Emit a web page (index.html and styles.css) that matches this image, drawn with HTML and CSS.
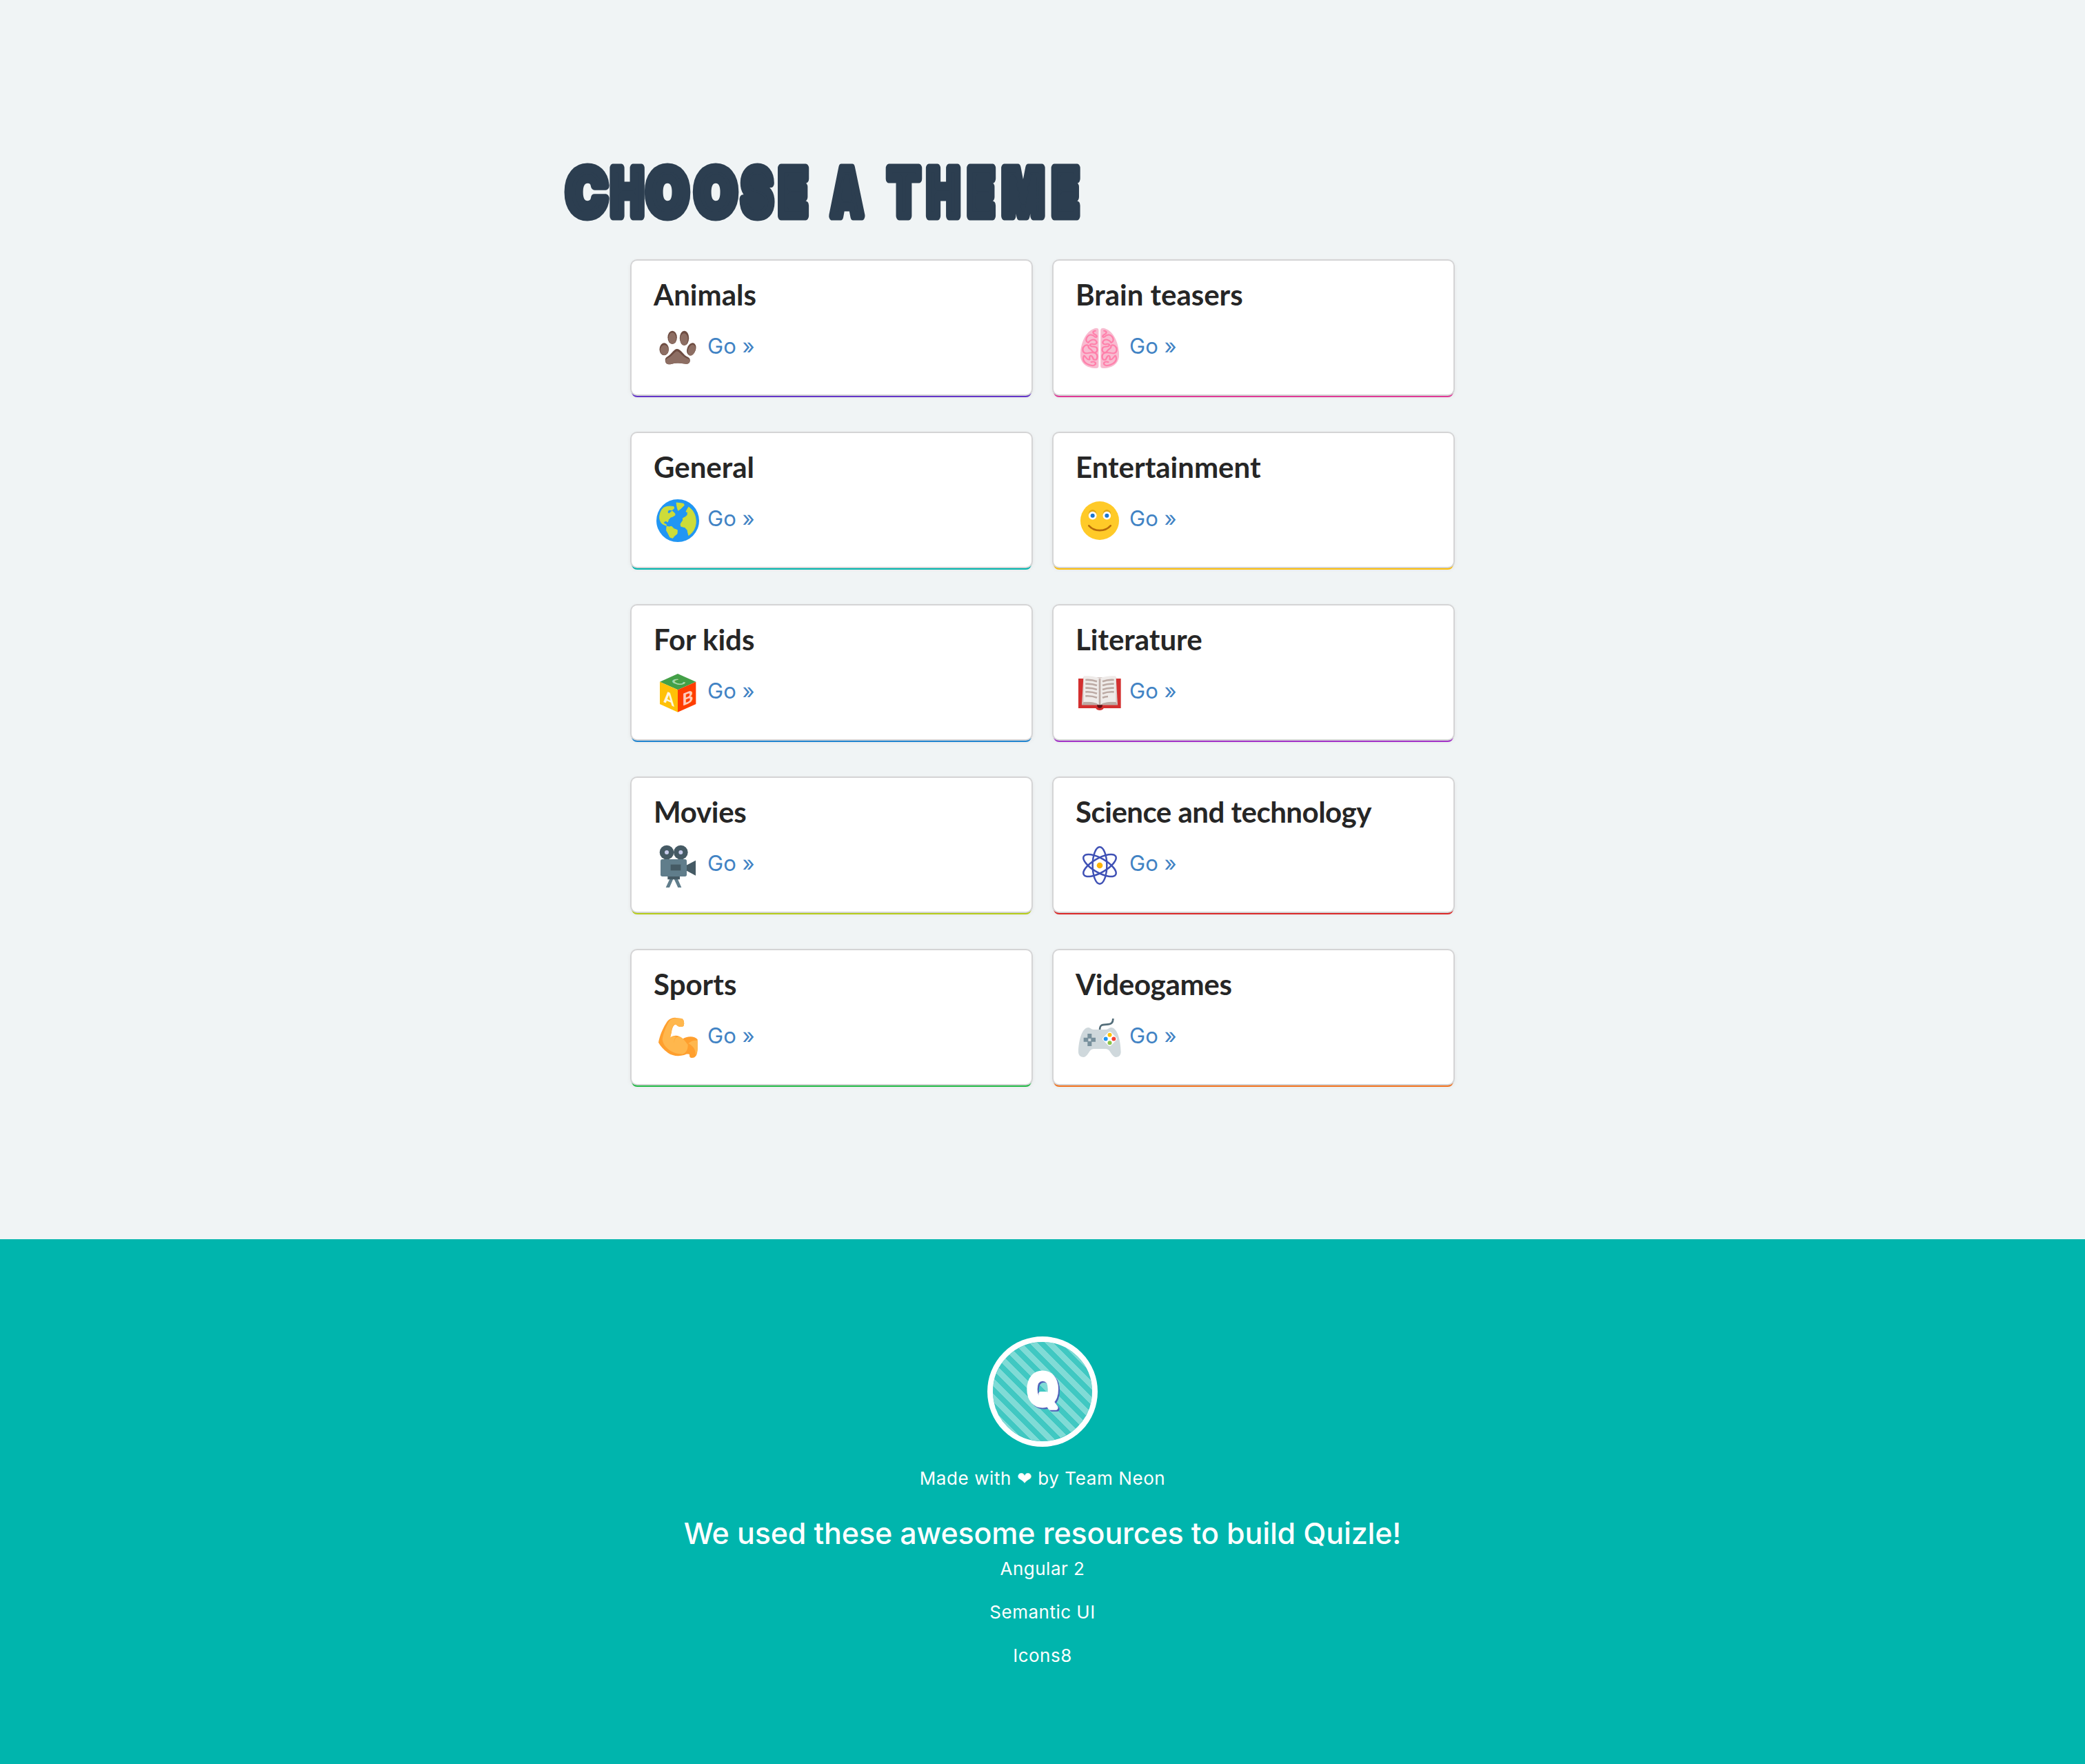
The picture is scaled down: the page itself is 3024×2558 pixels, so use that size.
FILE: index.html
```html
<!DOCTYPE html>
<html lang="en">
<head>
<meta charset="utf-8">
<title>Quizle</title>
<link rel="stylesheet" href="styles.css">
</head>
<body>
<main class="themes">
  <h1 class="title" aria-label="Choose a theme">
    <svg class="title-art" viewBox="8 0 800 100"><g class="title-text"><text transform="translate(51 82.500) scale(.84 1)">C</text><text transform="translate(109.500 82.500) scale(.67 1)">H</text><text transform="translate(168 82.500) scale(.83 1)" x="0 84.300">OO</text><text transform="translate(298 82.500) scale(.72 1)" x="0 73">SE</text> <text transform="translate(428.500 82.500) scale(.62 1)">A</text> <text transform="translate(511 82.500) scale(.72 1)">T</text><text transform="translate(568 82.500) scale(.67 1)" x="0 82 173 265">HEME</text></g></svg>
  </h1>
  <div class="cards">
    <article class="card violet">
      <h2 class="card-title">Animals</h2>
      <div class="card-row">
        <svg class="icon" viewBox="144 330 210 210"><g transform="scale(1.186 1)">
          <g fill="#6d4c41"><ellipse cx="190" cy="388" rx="17" ry="29"/><ellipse cx="234" cy="391" rx="17" ry="32"/><ellipse cx="160" cy="439" rx="17" ry="27"/><ellipse cx="260" cy="439" rx="16" ry="28" transform="rotate(14 260 439)"/><path d="M207 438C196 438 190 456 176 468C166 475 163 480 164 489C165 504 174 507 188 503Q208 496 230 502C246 506 255 502 255 487C255 479 251 475 243 471C230 463 221 438 207 438Z"/></g>
          <g fill="#8d6e63"><ellipse cx="190" cy="392" rx="14" ry="25"/><ellipse cx="233" cy="396" rx="14" ry="26"/><ellipse cx="161" cy="443" rx="15" ry="22"/><ellipse cx="261" cy="443" rx="13" ry="24" transform="rotate(14 261 443)"/><path d="M207 448C199 450 192 465 180 474C168 481 164 484 165 492C166 504 174 507 188 503Q208 496 230 502C246 506 254 502 254 490C254 483 249 481 240 477C226 469 216 449 207 448Z"/></g>
        </g></svg>
        <a class="go" href="#">Go »</a>
      </div>
    </article>
    <article class="card pink">
      <h2 class="card-title">Brain teasers</h2>
      <div class="card-row">
        <svg class="icon" viewBox="150 330 210 210"><g transform="scale(1.186 1)">
          <path fill="#f8bbd0" d="M202 347Q211 347 211 357V513Q211 522 202 522C166 522 144 499 144 465C144 410 166 354 202 347ZM228 347Q218 347 218 357V513Q218 522 228 522C264 522 286 499 286 465C286 410 264 354 228 347Z"/>
          <g fill="none" stroke="#ff80ab" stroke-width="6" stroke-linecap="round" stroke-linejoin="round"><path d="M199 359C188 360 189 370 196 374C207 380 206 390 198 386C188 374 177 374 170 384C162 396 165 408 173 411C178 400 190 394 199 400C209 410 202 420 191 417C181 414 176 420 183 426C195 431 205 425 206 441C206 454 194 458 188 448C183 436 169 436 174 424C164 416 151 428 153 444C155 457 165 459 176 455C195 452 207 456 206 472C205 490 192 488 190 477C184 463 176 464 178 484C168 487 166 475 158 467C151 477 154 494 167 502C181 511 194 514 199 505C203 494 191 492 184 495"/></g>
          <g fill="none" stroke="#ff80ab" stroke-width="6" stroke-linecap="round" stroke-linejoin="round" transform="translate(430 0) scale(-1 1)"><path d="M199 359C188 360 189 370 196 374C207 380 206 390 198 386C188 374 177 374 170 384C162 396 165 408 173 411C178 400 190 394 199 400C209 410 202 420 191 417C181 414 176 420 183 426C195 431 205 425 206 441C206 454 194 458 188 448C183 436 169 436 174 424C164 416 151 428 153 444C155 457 165 459 176 455C195 452 207 456 206 472C205 490 192 488 190 477C184 463 176 464 178 484C168 487 166 475 158 467C151 477 154 494 167 502C181 511 194 514 199 505C203 494 191 492 184 495"/></g>
        </g></svg>
        <a class="go" href="#">Go »</a>
      </div>
    </article>
    <article class="card teal">
      <h2 class="card-title">General</h2>
      <div class="card-row">
        <svg class="icon" viewBox="54 60 210 210">
          <circle cx="159" cy="165" r="93" fill="#2196f3"/>
          <path fill="#cddc39" stroke="#cddc39" stroke-width="3" stroke-linejoin="round" d="M92 114C100 104 122 100 141 104L143 111L135 119L121 118C112 124 114 134 122 134L134 123L146 133L147 141L136 148L128 150L119 160L115 171L108 166L98 170L99 178L108 181L110 187L92 179C76 165 76 138 92 114ZM111 190L122 192L132 190L142 200L157 206L156 222L144 232L137 241L125 237L118 222L110 208ZM153 87L184 91L187 98L174 111L161 121L157 110ZM206 106C229 120 241 150 237 180C233 205 220 220 206 229L201 206L190 194L173 190L171 180L182 163L181 155L192 149L201 140L202 128L195 126L200 116Z"/>
        </svg>
        <a class="go" href="#">Go »</a>
      </div>
    </article>
    <article class="card yellow">
      <h2 class="card-title">Entertainment</h2>
      <div class="card-row">
        <svg class="icon" viewBox="60 60 210 210">
          <circle cx="165" cy="165" r="84" fill="#ffca28"/>
          <g fill="#e0a716"><circle cx="134" cy="134" r="17"/><circle cx="196" cy="134" r="17"/></g>
          <g fill="#fff"><circle cx="134" cy="143" r="17.5"/><circle cx="196" cy="143" r="17.5"/></g>
          <g fill="#1976d2"><circle cx="134" cy="143" r="9"/><circle cx="196" cy="143" r="9"/></g>
          <path d="M118 187C141 214 189 214 212 187" fill="none" stroke="#b86b0a" stroke-width="8" stroke-linecap="round"/>
        </svg>
        <a class="go" href="#">Go »</a>
      </div>
    </article>
    <article class="card blue">
      <h2 class="card-title">For kids</h2>
      <div class="card-row">
        <svg class="icon" viewBox="54 60 210 210">
          <path fill="#43a047" d="M159 81L238 116L159 151L81 116Z"/>
          <path fill="#ffc107" d="M81 116L159 151V248L81 213Z"/>
          <path fill="#ff3d00" d="M238 116L159 151V248L238 213Z"/>
          <text class="block-letter" fill="#fff8e1" transform="matrix(.9 .41 0 1 121 214)">A</text>
          <text class="block-letter" fill="#ffccbc" transform="matrix(1 -.42 0 1 202 212)">B</text>
          <text class="block-letter" fill="#a5d6a7" transform="matrix(.68 -.3 .8 .36 181 127)">C</text>
        </svg>
        <a class="go" href="#">Go »</a>
      </div>
    </article>
    <article class="card purple">
      <h2 class="card-title">Literature</h2>
      <div class="card-row">
        <svg class="icon" viewBox="60 60 210 210">
          <path fill="#d32f2f" d="M72 102H257V231H182C178 243 152 243 148 231H72Z"/>
          <path fill="#d7ccc8" d="M94 96L87 217H243L236 96Z"/>
          <path fill="#bcaaa4" d="M95 204L87 217H243L235 204Z"/>
          <path fill="#efebe9" d="M95 91C118 89 150 92 165 102C180 92 212 89 235 91V204C212 202 182 204 170 215H160C148 204 118 202 95 204Z"/>
          <path fill="#bcaaa4" d="M161 103H169V216H161Z"/>
          <path fill="none" stroke="#bcaaa4" stroke-width="8" d="M103 108Q130 106 153 115M103 125Q130 123 153 132M103 143Q130 141 153 150M103 160Q130 158 153 167M103 178Q130 176 153 185M177 115Q200 106 227 108M177 132Q200 123 227 125M177 150Q200 141 227 143M177 167Q200 158 227 160M177 185Q189 180 201 180"/>
          <path fill="#5d1014" d="M153 217H177C177 235 153 235 153 217Z"/>
        </svg>
        <a class="go" href="#">Go »</a>
      </div>
    </article>
    <article class="card olive">
      <h2 class="card-title snug">Movies</h2>
      <div class="card-row">
        <svg class="icon" viewBox="54 60 210 210">
          <path fill="#607d8b" d="M124 224H139L123 261H107ZM143 224H159L175 261H160Z"/>
          <path fill="#455a64" d="M115 210H168V226H115ZM237 143V209L195 187V165Z"/>
          <circle cx="111" cy="108" r="31" fill="#455a64"/><circle cx="172" cy="108" r="31" fill="#455a64"/>
          <circle cx="111" cy="108" r="9" fill="#c5cae9"/><circle cx="172" cy="108" r="9" fill="#c5cae9"/>
          <rect x="84" y="138" width="114" height="75" rx="8" fill="#607d8b"/>
          <rect x="128" y="161" width="44" height="26" fill="#455a64"/>
        </svg>
        <a class="go" href="#">Go »</a>
      </div>
    </article>
    <article class="card red">
      <h2 class="card-title tight">Science and technology</h2>
      <div class="card-row">
        <svg class="icon" viewBox="60 60 210 210">
          <g fill="none" stroke="#3f51b5" stroke-width="7.5"><ellipse cx="165" cy="165" rx="31" ry="80"/><ellipse cx="165" cy="165" rx="31" ry="80" transform="rotate(60 165 165)"/><ellipse cx="165" cy="165" rx="31" ry="80" transform="rotate(-60 165 165)"/></g>
          <circle cx="165" cy="165" r="13" fill="#ffb300"/>
        </svg>
        <a class="go" href="#">Go »</a>
      </div>
    </article>
    <article class="card green">
      <h2 class="card-title">Sports</h2>
      <div class="card-row">
        <svg class="icon" viewBox="54 60 210 210">
          <path fill="#ff9f2e" d="M75 185C80 155 96 118 114 92C124 82 140 76 151 78L176 81C188 84 189 108 183 115C174 119 162 118 155 110C144 100 134 122 132 140L126 164C145 150 166 154 180 170C196 158 232 155 245 172V215C244 240 236 252 222 252C212 252 210 250 210 237C200 234 194 236 186 240C160 247 135 243 116 230C100 218 84 203 75 185Z"/>
          <path fill="#ffb74d" d="M92 172C95 148 108 116 120 95C132 78 150 78 176 81C188 84 189 108 183 115C174 119 162 118 155 110C144 100 136 112 133 130L126 164C135 156 145 155 152 161C142 168 140 186 149 200Q155 208 165 216C150 210 143 198 144 180C145 166 158 157 170 161C184 166 192 182 203 194C204 215 196 230 180 236C140 236 98 212 92 172ZM205 189C218 178 232 174 245 177V215C243 228 240 236 236 240C237 216 228 202 205 189Z"/>
        </svg>
        <a class="go" href="#">Go »</a>
      </div>
    </article>
    <article class="card orange">
      <h2 class="card-title snug">Videogames</h2>
      <div class="card-row">
        <svg class="icon" viewBox="60 60 210 210">
          <path fill="none" stroke="#546e7a" stroke-width="8" d="M165 132C165 110 172 108 194 107C216 106 223 100 223 81"/>
          <path fill="#cfd8dc" d="M116 120C124 120 128 129 138 129H192C202 129 206 120 214 120C242 120 256 176 257 226C257 243 246 249 236 249C216 249 212 213 192 213H138C118 213 114 249 94 249C84 249 72 243 72 226C73 176 88 120 116 120Z"/>
          <path fill="#78909c" d="M112 147H130V164H147V182H130V201H112V182H95V164H112Z"/>
          <path fill="#cfd8dc" d="M115 168H127V180H115Z"/>
          <rect x="184" y="145" width="49" height="49" rx="9" fill="#fff" transform="rotate(45 208.500 169.500)"/>
          <circle cx="208.500" cy="152" r="9" fill="#ffc107"/><circle cx="191" cy="169.500" r="9" fill="#2196f3"/><circle cx="226" cy="169.500" r="9" fill="#f44336"/><circle cx="208.500" cy="187" r="9" fill="#8bc34a"/>
        </svg>
        <a class="go" href="#">Go »</a>
      </div>
    </article>
  </div>
</main>
<footer class="footer">
  <div class="logo">
    <svg class="logo-art" viewBox="0 0 144 144"><text class="logo-letter logo-shade" aria-hidden="true" transform="translate(74.500 93) scale(.93 1)">Q</text><text class="logo-letter" transform="translate(72.500 91) scale(.93 1)">Q</text></svg>
  </div>
  <p class="made">Made with <span class="heart">❤</span> by Team Neon</p>
  <h3 class="credits-title">We used these awesome resources to build Quizle!</h3>
  <ul class="credits">
    <li>Angular 2</li>
    <li>Semantic UI</li>
    <li>Icons8</li>
  </ul>
</footer>
</body>
</html>
```
FILE: styles.css
```css
* { box-sizing: border-box; }
body {
  margin: 0;
  min-height: 2558px;
  display: flex;
  flex-direction: column;
  background: #f0f4f5;
  font-family: Inter, "Liberation Sans", sans-serif;
}
h1, h2, h3, p, ul { margin: 0; padding: 0; }

.themes {
  width: 1408px;
  height: 1797px;
  margin: 0 auto;
  padding-top: 230px;
}
.title { height: 100px; }
.title-art { display: block; width: 800px; height: 100px; overflow: visible; }
.title-text {
  font: 900 95px Inter, sans-serif;
  text-anchor: middle;
  fill: #2c3e50;
  stroke: #2c3e50;
  stroke-width: 13px;
  stroke-linejoin: round;
}

.cards {
  display: grid;
  grid-template-columns: 580px 580px;
  justify-content: center;
  gap: 56px 32px;
  margin-top: 48px;
}
.card {
  --accent: #6435c9;
  height: 194px;
  padding: 20px 32px 32px;
  border-radius: 8px;
  background: #fff;
  box-shadow: 0 0 0 2px #d4d4d5, 0 4px 0 0 var(--accent), 0 2px 6px 0 #d4d4d5;
}
.violet { --accent: #6435c9; }
.pink { --accent: #e03997; }
.teal { --accent: #00b5ad; }
.yellow { --accent: #fbbd08; }
.blue { --accent: #2185d0; }
.purple { --accent: #a333c8; }
.olive { --accent: #b5cc18; }
.red { --accent: #db2828; }
.green { --accent: #21ba45; }
.orange { --accent: #f2711c; }

.card-title {
  margin-bottom: 14px;
  font: 700 42px/58px Lato, sans-serif;
  color: #262626;
}
.snug { letter-spacing: -.3px; }
.tight { letter-spacing: -.5px; }
.card-row { display: flex; align-items: center; gap: 8px; }
.icon { width: 70px; height: 70px; flex: none; }
.block-letter { font: 900 72px Lato, sans-serif; text-anchor: middle; }
.go {
  padding-bottom: 7px;
  font-size: 31px;
  line-height: 40px;
  color: #4183c4;
  text-decoration: none;
}

.footer {
  flex: 1;
  display: flex;
  flex-direction: column;
  align-items: center;
  padding-top: 141px;
  background: #00b5ad;
  color: #fff;
}
.logo {
  width: 160px;
  height: 160px;
  border: 8px solid #fff;
  border-radius: 50%;
  background: repeating-linear-gradient(45deg, #40c8c2 0 7.8px, #80dbd6 7.8px 16.3px);
  background-clip: padding-box;
}
.logo-art { display: block; width: 144px; height: 144px; }
.logo-letter {
  font: 700 62px Inter, sans-serif;
  text-anchor: middle;
  fill: #fff;
  stroke: #fff;
  stroke-width: 7px;
  stroke-linejoin: round;
}
.logo-shade { fill: #5060b8; stroke: #5060b8; }
.made { margin-top: 26px; font-size: 26px; line-height: 40px; letter-spacing: .6px; }
.heart { font-family: "DejaVu Sans", sans-serif; }
.credits-title { margin-top: 29px; font-size: 43px; font-weight: 500; line-height: 60px; letter-spacing: -.15px; }
.credits { margin-top: -10px; list-style: none; font-size: 26px; line-height: 63px; letter-spacing: .5px; text-align: center; }
.credits li { height: 63px; }
```
